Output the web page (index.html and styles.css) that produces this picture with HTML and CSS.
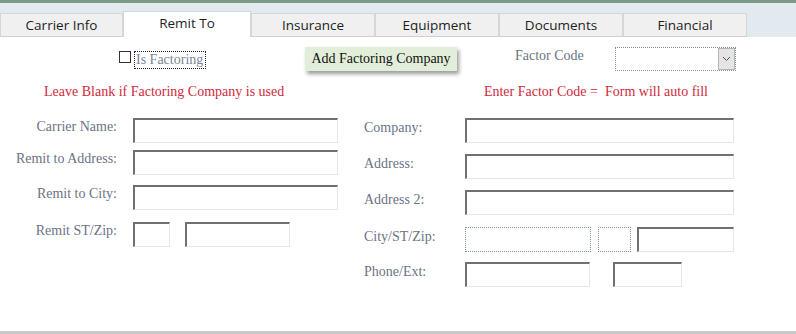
FILE: index.html
```html
<!DOCTYPE html>
<html>
<head>
    <title>Carrier - Remit To</title>
    <meta name="viewport" content="width=device-width, initial-scale=1.0">
    <link rel="stylesheet" href="styles.css">
</head>
<body>
    <div class="topbar"></div>

    <div class="tabs">
        <div class="tab first">Carrier Info</div>
        <div class="tab active">Remit To</div>
        <div class="tab">Insurance</div>
        <div class="tab">Equipment</div>
        <div class="tab">Documents</div>
        <div class="tab">Financial</div>
    </div>

    <div class="panel">
        <div class="toprow">
            <div class="factoring">
                <input type="checkbox" id="isFactoring" class="check">
                <label for="isFactoring" class="check-label">Is Factoring</label>
            </div>
            <button type="button" class="add-btn">Add Factoring Company</button>
            <span class="factor-label">Factor Code</span>
            <div class="select">
                <span class="arrow">
                    <svg width="9" height="6" viewBox="0 0 9 6"><path d="M1 1 L4.5 4.5 L8 1" fill="none" stroke="#555" stroke-width="1"/></svg>
                </span>
            </div>
        </div>

        <div class="notes">
            <span class="note left-note">Leave Blank if Factoring Company is used</span>
            <span class="note right-note">Enter Factor Code = &nbsp;Form will auto fill</span>
        </div>

        <div class="forms">
            <div class="form-left">
                <label>Carrier Name:</label>
                <input type="text" class="field wide">

                <label>Remit to Address:</label>
                <input type="text" class="field wide">

                <label>Remit to City:</label>
                <input type="text" class="field wide">

                <label>Remit ST/Zip:</label>
                <div class="pair">
                    <input type="text" class="field st">
                    <input type="text" class="field zip">
                </div>
            </div>

            <div class="form-right">
                <label>Company:</label>
                <input type="text" class="field wide2">

                <label>Address:</label>
                <input type="text" class="field wide2">

                <label>Address 2:</label>
                <input type="text" class="field wide2">

                <label>City/ST/Zip:</label>
                <div class="pair">
                    <input type="text" class="field dotted city">
                    <input type="text" class="field dotted state">
                    <input type="text" class="field zip2">
                </div>

                <label>Phone/Ext:</label>
                <div class="pair">
                    <input type="text" class="field phone">
                    <input type="text" class="field ext">
                </div>
            </div>
        </div>
    </div>
</body>
</html>
```

FILE: styles.css
```css
body{
  margin:0;
  padding:0;
  font-family:"Liberation Serif", "Times New Roman", serif;
  font-size:14px;
  background:#fff;
}
.topbar{
  height:3px;
  background-color:#7b9a88;
}
.tabs{
  height:34px;
  background-color:#e3eaef;
  display:flex;
  align-items:flex-end;
}
.tab{
  box-sizing:border-box;
  width:124px;
  height:24px;
  background-color:#f0f0f0;
  border:1px solid #d6d6d6;
  border-bottom:1px solid #d0d0d0;
  font-family:"Open Sans", "Noto Sans", sans-serif;
  font-size:13.5px;
  color:#1e1e1e;
  text-align:center;
  line-height:22px;
}
.tab.first{
  width:123px;
}
.tab.active{
  width:128px;
  height:26px;
  background:#fff;
  border-bottom:none;
  line-height:22px;
}
.panel{
  height:294px;
  border-bottom:3px solid #c9c9c9;
}
.toprow{
  display:flex;
  align-items:flex-start;
  padding-top:10px;
  height:24px;
}
.factoring{
  display:flex;
  align-items:flex-start;
  margin-left:119px;
  padding-top:4px;
}
.check{
  appearance:none;
  -webkit-appearance:none;
  margin:0;
  width:12px;
  height:12px;
  border:1px solid #333;
  box-sizing:border-box;
  background:#fff;
}
.check-label{
  margin-left:3px;
  border:1px dotted #222;
  color:#7d8595;
  padding:0 1px;
  height:16px;
  line-height:16px;
  width:68px;
}
.add-btn{
  margin-left:99px;
  width:152px;
  height:24px;
  border:none;
  background-color:#e2eed9;
  box-shadow:2px 3px 4px rgba(0,0,0,0.4);
  font-family:"Liberation Serif", "Times New Roman", serif;
  font-size:14px;
  color:#111;
  padding:0;
}
.factor-label{
  margin-left:58px;
  color:#6b7385;
  padding-top:1px;
}
.select{
  margin-left:31px;
  width:121px;
  height:24px;
  box-sizing:border-box;
  border:1px dotted #7f8fa0;
  display:flex;
  justify-content:flex-end;
}
.arrow{
  width:17px;
  height:22px;
  box-sizing:border-box;
  background:#e4e4e4;
  border:1px solid #b5b5b5;
  display:flex;
  align-items:center;
  justify-content:center;
}
.notes{
  display:flex;
  height:18px;
  margin-top:12px;
  line-height:18px;
}
.note{
  color:#cf2a3b;
}
.left-note{
  margin-left:44px;
}
.right-note{
  margin-left:auto;
  margin-right:88px;
}
.forms{
  display:flex;
  margin-top:17px;
}
.form-left{
  display:grid;
  grid-template-columns:117px 205px;
  grid-template-rows:32px 35px 37px 25px;
  column-gap:16px;
  align-items:start;
}
.form-left label{
  text-align:right;
  color:#6b7385;
  padding-top:1px;
  white-space:nowrap;
}
.form-right{
  margin-left:26px;
  display:grid;
  grid-template-columns:101px 269px;
  grid-template-rows:36px 36px 37px 35px 25px;
  align-items:start;
}
.form-right label{
  color:#6b7385;
  padding-top:2px;
}
.field{
  box-sizing:border-box;
  height:25px;
  margin:0;
  padding:0 3px;
  border-style:solid;
  border-width:2px 1px 1px 2px;
  border-color:#707070 #e6e6e6 #e6e6e6 #707070;
  background:#fff;
  outline:none;
}
.wide{
  width:205px;
}
.wide2{
  width:269px;
}
.pair{
  display:flex;
}
.st{
  width:37px;
}
.zip{
  width:105px;
  margin-left:15px;
}
.dotted{
  border:1px dotted #7f8fa0;
}
.city{
  width:126px;
}
.state{
  width:33px;
  margin-left:7px;
}
.zip2{
  width:97px;
  margin-left:6px;
}
.phone{
  width:125px;
}
.ext{
  width:69px;
  margin-left:23px;
}
```
